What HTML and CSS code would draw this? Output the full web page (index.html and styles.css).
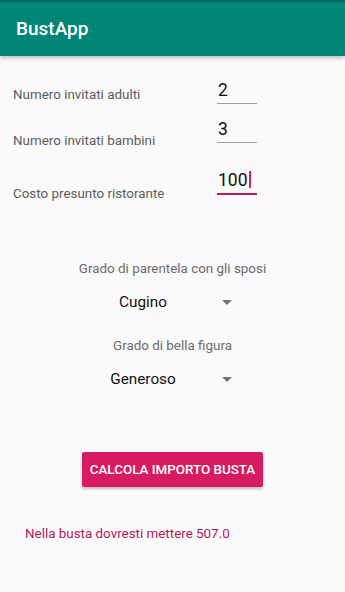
FILE: index.html
```html
<!DOCTYPE html>
<html lang="it">
<head>
<meta charset="utf-8">
<title>BustApp</title>
<link rel="stylesheet" href="styles.css">
</head>
<body>
<header class="appbar"><h1 class="title">BustApp</h1></header>
<main class="content">
  <div class="row row-1">
    <span class="label">Numero invitati adulti</span>
    <span class="field">2</span>
  </div>
  <div class="row row-2">
    <span class="label">Numero invitati bambini</span>
    <span class="field">3</span>
  </div>
  <div class="row row-3">
    <span class="label">Costo presunto ristorante</span>
    <span class="field field-active">100<span class="cursor"></span></span>
  </div>

  <p class="spin-label spin-label-1">Grado di parentela con gli sposi</p>
  <div class="spinner">
    <span class="spin-value">Cugino</span>
    <svg class="arrow" width="10" height="5" viewBox="0 0 10 5"><path d="M0 0H10L5 5Z"/></svg>
  </div>
  <p class="spin-label spin-label-2">Grado di bella figura</p>
  <div class="spinner">
    <span class="spin-value">Generoso</span>
    <svg class="arrow" width="10" height="5" viewBox="0 0 10 5"><path d="M0 0H10L5 5Z"/></svg>
  </div>

  <div class="actions"><button class="btn">CALCOLA IMPORTO BUSTA</button></div>
  <p class="result">Nella busta dovresti mettere 507.0</p>
</main>
</body>
</html>
```

FILE: styles.css
```css
* { box-sizing: border-box; }
html, body { margin: 0; padding: 0; }
body {
  width: 345px;
  height: 592px;
  overflow: hidden;
  background: #fafafa;
  font-family: Roboto, "Noto Sans", sans-serif;
}
.appbar {
  height: 56px;
  background: #008577;
  border-top: 2px solid #00695c;
  display: flex;
  align-items: center;
  padding-left: 16px;
  box-shadow: 0 2px 4px rgba(0,0,0,0.25);
  position: relative;
}
.title {
  margin: 0;
  color: #ffffff;
  font-size: 19px;
  font-weight: 500;
  line-height: 24px;
}
.content { display: flex; flex-direction: column; }
.row {
  display: grid;
  grid-template-columns: 204px 40px;
  align-items: start;
  padding-left: 13px;
}
.row-1 { margin-top: 24px; }
.row-2 { margin-top: 15px; }
.row-3 { margin-top: 21px; }
.label {
  font-size: 13.4px;
  line-height: 17px;
  color: #5c5c5c;
  white-space: nowrap;
}
.row-1 .label { margin-top: 6px; }
.row-2 .label { margin-top: 13px; }
.row-3 .label { margin-top: 15px; }
.field {
  display: block;
  width: 40px;
  font-size: 17.5px;
  line-height: 21px;
  color: #111;
  padding: 0 0 2px 1px;
  border-bottom: 1px solid #9e9e9e;
}
.field-active { border-bottom: 2px solid #c2185b; }
.cursor {
  display: inline-block;
  width: 2px;
  height: 17px;
  background: #d81b60;
  vertical-align: -2px;
  margin-left: 1px;
}
.spin-label {
  margin: 0;
  text-align: center;
  font-size: 13.4px;
  line-height: 17px;
  color: #6b6b6b;
}
.spin-label-1 { margin-top: 58px; }
.spin-label-2 { margin-top: 25px; }
.spinner {
  margin: 16px auto 0;
  width: 135px;
  display: flex;
  align-items: center;
}
.spin-value {
  width: 76px;
  text-align: center;
  font-size: 15.3px;
  line-height: 19px;
  color: #111;
}
.arrow { margin-left: 41px; fill: #757575; }
.actions { display: flex; justify-content: center; margin-top: 63px; }
.btn {
  width: 181px;
  height: 35px;
  border: none;
  border-radius: 2px;
  background: #d81b60;
  color: #fff;
  font-family: Roboto, "Noto Sans", sans-serif;
  font-size: 13.4px;
  font-weight: 500;
  padding: 0;
  box-shadow: 0 2px 3px rgba(0,0,0,0.25);
}
.result {
  margin: 38px 0 0 25px;
  font-size: 13.4px;
  line-height: 17px;
  color: #b3195a;
}
```
